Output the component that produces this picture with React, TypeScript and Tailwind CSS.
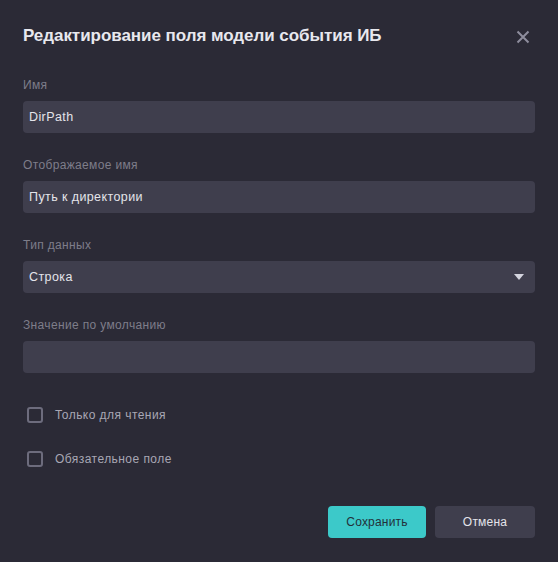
import React from "react";

function Field({ label, value, select }: { label: string; value?: string; select?: boolean }) {
  return (
    <div className="flex flex-col">
      <div className="text-[12px] leading-[14px] text-[#7e7d8a] tracking-[0.35px] mb-[9px]">{label}</div>
      <div className="h-[32px] rounded-[4px] bg-[#3f3e4d] flex items-center pl-[6px] pr-[11px] text-[12.5px] text-[#e4e4ea] tracking-[0.4px]">
        <span className="flex-1">{value}</span>
        {select && (
          <svg width="10" height="6" viewBox="0 0 10 6">
            <path d="M0 0 H10 L5 6 Z" fill="#d4d4de" />
          </svg>
        )}
      </div>
    </div>
  );
}

function Check({ label }: { label: string }) {
  return (
    <div className="flex items-center h-[16px]">
      <div className="w-[16px] h-[16px] ml-[4px] rounded-[3px] border-2 border-[#6d6c7d]" />
      <span className="ml-[12px] text-[12px] text-[#a8a7b4] tracking-[0.45px]">{label}</span>
    </div>
  );
}

export default function App() {
  return (
    <div className="w-[558px] h-[562px] bg-[#2b2a36] px-[23px] pt-[26px]" style={{ fontFamily: '"Liberation Sans", Arial, sans-serif' }}>
      <div className="flex items-center justify-between h-[20px]">
        <h1 className="text-[17px] font-bold text-[#e8e8ee] tracking-[-0.05px]">Редактирование поля модели события ИБ</h1>
        <svg width="14" height="14" viewBox="0 0 14 14" className="mr-[5px] mt-[2px]">
          <path d="M1.5 1.5 L12.5 12.5 M12.5 1.5 L1.5 12.5" stroke="#8e8d9d" strokeWidth="2" />
        </svg>
      </div>
      <div className="mt-[32px] flex flex-col gap-[25px]">
        <Field label="Имя" value="DirPath" />
        <Field label="Отображаемое имя" value="Путь к директории" />
        <Field label="Тип данных" value="Строка" select />
        <Field label="Значение по умолчанию" value="" />
      </div>
      <div className="mt-[34px] flex flex-col gap-[28px]">
        <Check label="Только для чтения" />
        <Check label="Обязательное поле" />
      </div>
      <div className="mt-[39px] flex justify-end gap-[9px]">
        <button className="w-[98px] h-[32px] rounded-[4px] bg-[#3cc9c9] text-[12px] text-[#23303a] tracking-[0.2px]">Сохранить</button>
        <button className="w-[100px] h-[32px] rounded-[4px] bg-[#3f3e4d] text-[12px] text-[#e4e4ea] tracking-[0.2px]">Отмена</button>
      </div>
    </div>
  );
}
